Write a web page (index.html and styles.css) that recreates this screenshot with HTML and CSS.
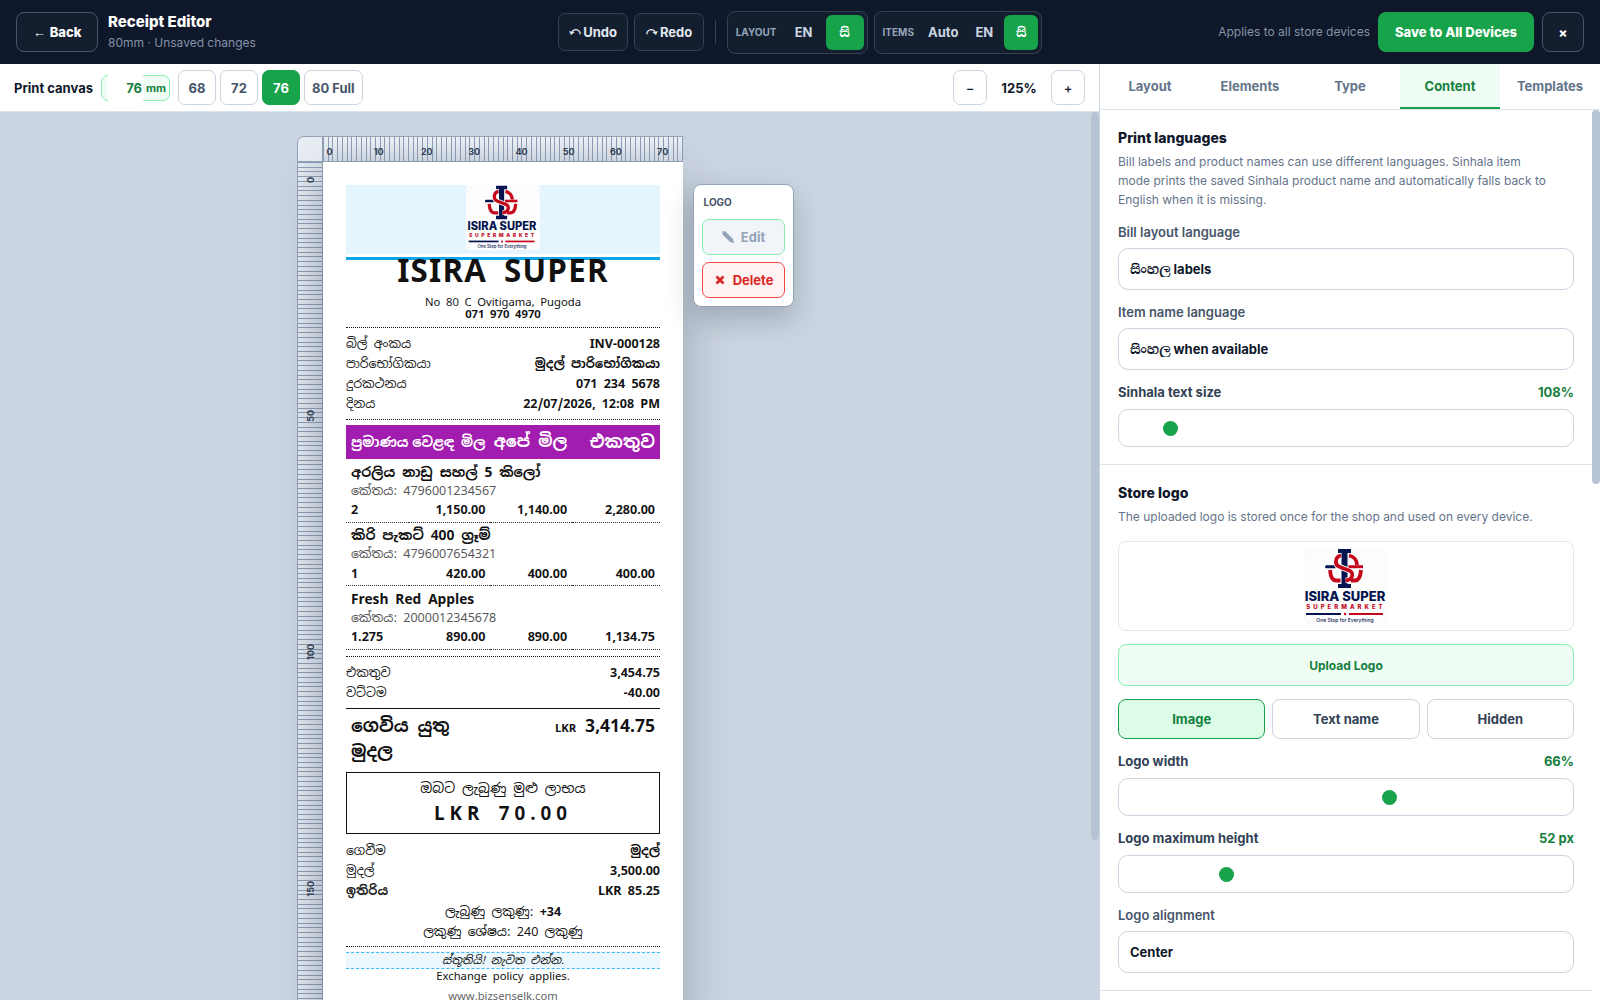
FILE: index.html
```html
<!DOCTYPE html>
<html lang="en">
<head>
    <meta charset="UTF-8">
    <title>Receipt Editor</title>
    <link rel="stylesheet" href="styles.css">
</head>
<body>

<div class="app">
    <header class="topbar">
        <div class="topbar-left">
            <button class="btn-dark"><span class="arrow">←</span> Back</button>
            <div>
                <h1>Receipt Editor</h1>
                <p class="status">80mm · Unsaved changes</p>
            </div>
        </div>
        <div class="topbar-center">
            <button class="btn-history"><span class="turn">↶</span>Undo</button>
            <button class="btn-history"><span class="turn">↷</span>Redo</button>
            <span class="divider"></span>
            <div class="lang-group">
                <span class="lang-title">LAYOUT</span>
                <button>EN</button>
                <button class="active">සි</button>
            </div>
            <div class="lang-group compact">
                <span class="lang-title">ITEMS</span>
                <button>Auto</button>
                <button>EN</button>
                <button class="active">සි</button>
            </div>
        </div>
        <div class="topbar-right">
            <span class="hint">Applies to all store devices</span>
            <button class="btn-save">Save to All Devices</button>
            <button class="btn-dark btn-close" aria-label="Close">×</button>
        </div>
    </header>

    <div class="workspace">
        <main class="editor">
            <div class="toolbar">
                <label for="canvasWidth" class="toolbar-label">Print canvas</label>
                <div class="mm-box"><input type="text" id="canvasWidth" value="76"><span>mm</span></div>
                <div class="presets">
                    <button>68</button>
                    <button>72</button>
                    <button class="active">76</button>
                    <button>80 Full</button>
                </div>
                <div class="zoom-controls">
                    <button aria-label="Zoom out">−</button>
                    <span>125%</span>
                    <button aria-label="Zoom in">+</button>
                </div>
            </div>

            <div class="scroll-row canvas">
                <div class="stage">
                    <div class="sheet">
                        <div class="corner"></div>
                        <div class="ruler-x">
                            <span>0</span><span>10</span><span>20</span><span>30</span><span>40</span><span>50</span><span>60</span><span>70</span>
                        </div>
                        <div class="ruler-y">
                            <span>0</span><span>50</span><span>100</span><span>150</span>
                        </div>
                        <article class="receipt">
                            <div class="r-logo">
                                <svg viewBox="0 0 86 76">
                                    <rect width="86" height="76" rx="4" fill="#fdfdfe"/>
                                    <path d="M0 9 L9 0 M77 0 L86 10 M0 68 L7 76 M79 76 L86 69" stroke="#e8eaee" stroke-width=".6"/>
                                    <path d="M35 1h13v4h-3.500v31H48v4H35v-4h3.500V5H35z" fill="#06154f"/>
                                    <path d="M23.500 17.200h9v3h-9a1.500 1.500 0 0 1 0-3z" fill="#06154f"/>
                                    <path d="M38 7.500c-6 1-7 9.500-1 11.500l9 3.500c5.500 2 4 9.500-3.500 10" fill="none" stroke="#fdfdfe" stroke-width="5.600"/>
                                    <g fill="none" stroke="#c4071b" stroke-width="3.800">
                                        <path d="M38 7.500c-6 1-7 9.500-1 11.500l9 3.500c5.500 2 4 9.500-3.500 10"/>
                                        <path d="M46 7.500c5 1 8 5 8 9.500"/>
                                        <path d="M45.500 18.700H60" stroke-width="3"/>
                                        <path d="M27 22c.5 7 2.500 10.500 6 10.500h4.500"/>
                                        <path d="M58 22c-.5 7-2.500 10.500-6 10.500h-4"/>
                                    </g>
                                    <text x="42" y="53" class="logo-name">ISIRA SUPER</text>
                                    <text x="43" y="61" class="logo-kind">SUPERMARKET</text>
                                    <path d="M3 66h35" stroke="#06154f" stroke-width="2"/>
                                    <path d="M46 66h34" stroke="#c4071b" stroke-width="2"/>
                                    <circle cx="42" cy="66" r="1.200" fill="#c4071b"/>
                                    <text x="42" y="74" class="logo-tag">One Stop for Everything</text>
                                </svg>
                            </div>
                            <h2>ISIRA SUPER</h2>
                            <p class="r-address">No 80 C Ovitigama, Pugoda</p>
                            <p class="r-address"><strong>071 970 4970</strong></p>
                            <hr>
                            <dl class="rows">
                                <div><dt>බිල් අංකය</dt><dd>INV-000128</dd></div>
                                <div><dt>පාරිභෝගිකයා</dt><dd>මුදල් පාරිභෝගිකයා</dd></div>
                                <div><dt>දුරකථනය</dt><dd>071 234 5678</dd></div>
                                <div><dt>දිනය</dt><dd>22/07/2026, 12:08 PM</dd></div>
                            </dl>
                            <hr class="tight">
                            <table class="items">
                                <thead>
                                    <tr><th class="small">ප්‍රමාණය</th><th class="small">වෙළඳ මිල</th><th class="medium">අපේ මිල</th><th>එකතුව</th></tr>
                                </thead>
                                <tbody>
                                    <tr class="name"><td colspan="4">අරලිය නාඩු සහල් 5 කිලෝ</td></tr>
                                    <tr class="code"><td colspan="4">කේතය: 4796001234567</td></tr>
                                    <tr class="values"><td>2</td><td>1,150.00</td><td>1,140.00</td><td>2,280.00</td></tr>
                                    <tr class="name"><td colspan="4">කිරි පැකට් 400 ග්‍රෑම්</td></tr>
                                    <tr class="code"><td colspan="4">කේතය: 4796007654321</td></tr>
                                    <tr class="values"><td>1</td><td>420.00</td><td>400.00</td><td>400.00</td></tr>
                                    <tr class="name"><td colspan="4">Fresh Red Apples</td></tr>
                                    <tr class="code"><td colspan="4">කේතය: 2000012345678</td></tr>
                                    <tr class="values"><td>1.275</td><td>890.00</td><td>890.00</td><td>1,134.75</td></tr>
                                </tbody>
                            </table>
                            <hr>
                            <dl class="rows">
                                <div><dt>එකතුව</dt><dd>3,454.75</dd></div>
                                <div><dt>වට්ටම</dt><dd>-40.00</dd></div>
                            </dl>
                            <div class="grand">
                                <span class="grand-label">ගෙවිය යුතු මුදල</span>
                                <span><small>LKR</small> 3,414.75</span>
                            </div>
                            <div class="profit">
                                <p>ඔබට ලැබුණු මුළු ලාභය</p>
                                <p class="profit-sum">LKR 70.00</p>
                            </div>
                            <dl class="rows">
                                <div><dt>ගෙවීම</dt><dd>මුදල්</dd></div>
                                <div><dt>මුදල්</dt><dd>3,500.00</dd></div>
                                <div><dt><strong>ඉතිරිය</strong></dt><dd>LKR 85.25</dd></div>
                            </dl>
                            <div class="points">
                                <p>ලැබුණු ලකුණු: <strong>+34</strong></p>
                                <p>ලකුණු ශේෂය: 240 ලකුණු</p>
                            </div>
                            <hr class="close">
                            <p class="thanks">ස්තූතියි! නැවත එන්න.</p>
                            <p class="policy">Exchange policy applies.</p>
                            <p class="site">www.bizsenselk.com</p>
                        </article>
                    </div>
                    <div class="popover">
                        <span class="popover-title">LOGO</span>
                        <button class="edit"><svg viewBox="0 0 14 14"><path d="M1.500 1 4.500 1.500 12 9l1 4-4-1L1.500 4.500z" fill="currentColor"/></svg>Edit</button>
                        <button class="delete"><svg viewBox="0 0 14 14"><path d="M3.500 3.500l7 7M10.500 3.500l-7 7" stroke="currentColor" stroke-width="2.600"/></svg>Delete</button>
                    </div>
                </div>
                <div class="scrollbar"><div class="thumb canvas-thumb"></div></div>
            </div>
        </main>

        <aside class="panel">
            <nav class="tabs">
                <button>Layout</button>
                <button>Elements</button>
                <button>Type</button>
                <button class="active">Content</button>
                <button>Templates</button>
            </nav>
            <div class="scroll-row">
                <div class="panel-body">
                    <section>
                        <h3>Print languages</h3>
                        <p>Bill labels and product names can use different languages. Sinhala item mode prints the saved Sinhala product name and automatically falls back to English when it is missing.</p>
                        <div class="field">
                            <label for="billLang">Bill layout language</label>
                            <select id="billLang"><option>සිංහල labels</option></select>
                        </div>
                        <div class="field">
                            <label for="itemLang">Item name language</label>
                            <select id="itemLang"><option>සිංහල when available</option></select>
                        </div>
                        <div class="field slider">
                            <label for="textSize">Sinhala text size</label>
                            <output for="textSize">108%</output>
                            <input type="range" id="textSize" min="100" max="200" value="108">
                        </div>
                    </section>
                    <section>
                        <h3>Store logo</h3>
                        <p>The uploaded logo is stored once for the shop and used on every device.</p>
                        <div class="logo-preview">
                            <svg viewBox="0 0 86 76">
                                <rect width="86" height="76" rx="4" fill="#fdfdfe"/>
                                <path d="M0 9 L9 0 M77 0 L86 10 M0 68 L7 76 M79 76 L86 69" stroke="#e8eaee" stroke-width=".6"/>
                                <path d="M35 1h13v4h-3.500v31H48v4H35v-4h3.500V5H35z" fill="#06154f"/>
                                <path d="M23.500 17.200h9v3h-9a1.500 1.500 0 0 1 0-3z" fill="#06154f"/>
                                <path d="M38 7.500c-6 1-7 9.500-1 11.500l9 3.500c5.500 2 4 9.500-3.500 10" fill="none" stroke="#fdfdfe" stroke-width="5.600"/>
                                <g fill="none" stroke="#c4071b" stroke-width="3.800">
                                    <path d="M38 7.500c-6 1-7 9.500-1 11.500l9 3.500c5.500 2 4 9.500-3.500 10"/>
                                    <path d="M46 7.500c5 1 8 5 8 9.500"/>
                                    <path d="M45.500 18.700H60" stroke-width="3"/>
                                    <path d="M27 22c.5 7 2.500 10.500 6 10.500h4.500"/>
                                    <path d="M58 22c-.5 7-2.500 10.500-6 10.500h-4"/>
                                </g>
                                <text x="42" y="53" class="logo-name">ISIRA SUPER</text>
                                <text x="43" y="61" class="logo-kind">SUPERMARKET</text>
                                <path d="M3 66h35" stroke="#06154f" stroke-width="2"/>
                                <path d="M46 66h34" stroke="#c4071b" stroke-width="2"/>
                                <circle cx="42" cy="66" r="1.200" fill="#c4071b"/>
                                <text x="42" y="74" class="logo-tag">One Stop for Everything</text>
                            </svg>
                        </div>
                        <button class="upload">Upload Logo</button>
                        <div class="modes">
                            <button class="active">Image</button>
                            <button>Text name</button>
                            <button>Hidden</button>
                        </div>
                        <div class="field slider">
                            <label for="logoWidth">Logo width</label>
                            <output for="logoWidth">66%</output>
                            <input type="range" id="logoWidth" min="20" max="96" value="66">
                        </div>
                        <div class="field slider">
                            <label for="logoHeight">Logo maximum height</label>
                            <output for="logoHeight">52 px</output>
                            <input type="range" id="logoHeight" min="20" max="170" value="52">
                        </div>
                        <div class="field">
                            <label for="logoAlign">Logo alignment</label>
                            <select id="logoAlign"><option>Center</option></select>
                        </div>
                    </section>
                </div>
                <div class="scrollbar"><div class="thumb panel-thumb"></div></div>
            </div>
        </aside>
    </div>
</div>

</body>
</html>
```

FILE: styles.css
```css
* {
    box-sizing: border-box;
}

:root {
    --zoom: 1.25;
    --mm: calc(1mm * var(--zoom));
}

body {
    margin: 0;
    font-family: Inter, "Noto Serif Sinhala", sans-serif;
    font-size: 13px;
    color: #0f172a;
}

h1, h2, h3, p, dl, dt, dd {
    margin: 0;
}

button, input, select {
    font: inherit;
    font-weight: 700;
    color: inherit;
}

button {
    display: flex;
    align-items: center;
    justify-content: center;
    padding: 0;
    cursor: pointer;
    white-space: nowrap;
}

/* store logo lettering */
.logo-name, .logo-kind, .logo-tag {
    text-anchor: middle;
    font-family: Inter, sans-serif;
    fill: #06154f;
}

.logo-name {
    font-size: 13px;
    font-weight: 800;
}

.logo-kind {
    font-size: 6px;
    font-weight: 800;
    letter-spacing: 3px;
    fill: #c4071b;
}

.logo-tag {
    font-size: 5px;
    font-weight: 500;
}

.app {
    display: flex;
    flex-direction: column;
    height: 100vh;
    overflow: hidden;
}

/* top bar */
.topbar {
    display: grid;
    grid-template-columns: 1fr auto 1fr;
    align-items: center;
    height: 64px;
    flex: none;
    padding: 0 16px;
    background: #0f172a;
    color: #fff;
}

.topbar-left, .topbar-center, .topbar-right {
    display: flex;
    align-items: center;
}

.topbar-left {
    gap: 10px;
}

.topbar-center {
    gap: 6px;
}

.topbar-right {
    gap: 8px;
    justify-content: flex-end;
}

.topbar h1 {
    font-size: 15px;
    line-height: 22px;
    font-weight: 800;
}

.status, .hint {
    font-size: 12px;
    line-height: 20px;
    color: #8493a8;
}

.btn-dark {
    gap: 4px;
    width: 82px;
    height: 40px;
    border: 1px solid #475569;
    border-radius: 8px;
    background: #131e2e;
    font-weight: 800;
}

.arrow {
    font-family: "Noto Sans", sans-serif;
}

.turn {
    font-family: "Noto Sans Math", sans-serif;
    font-size: 11px;
    line-height: 16px;
}

.btn-close {
    width: 42px;
}

.btn-history {
    gap: 1px;
    width: 70px;
    height: 38px;
    border: 1px solid #334155;
    border-radius: 7px;
    background: #131e2e;
    color: #e2e8f0;
}

.divider {
    width: 1px;
    height: 24px;
    margin: 0 5px;
    background: #334155;
}

.lang-group {
    display: flex;
    align-items: center;
    padding: 3px;
    gap: 3px;
    border: 1px solid #334155;
    border-radius: 8px;
    background: #131e2e;
}

.lang-group button {
    min-width: 38px;
    height: 35px;
    padding: 0 6px;
    border: 0;
    border-radius: 6px;
    background: none;
    color: #cbd5e1;
}

.compact button {
    min-width: 34px;
}

.lang-group .active {
    background: #16a34a;
    color: #fff;
}

.lang-title {
    padding: 0 5px;
    font-size: 10px;
    font-weight: 700;
    color: #94a3b8;
}

.btn-save {
    height: 40px;
    padding: 0 17px;
    border: 0;
    border-radius: 8px;
    background: #16a34a;
    font-weight: 800;
}

/* editor */
.workspace {
    display: grid;
    grid-template-columns: 1fr 500px;
    flex: 1;
    min-height: 0;
}

.editor {
    display: flex;
    flex-direction: column;
    min-width: 0;
    min-height: 0;
    border-right: 1px solid #cbd5e1;
}

.toolbar {
    display: flex;
    align-items: center;
    gap: 8px;
    height: 48px;
    flex: none;
    padding: 0 14px;
    border-bottom: 1px solid #dbe3ec;
}

.toolbar-label {
    font-weight: 700;
}

.mm-box {
    display: flex;
    align-items: center;
    width: 69px;
    height: 26px;
    padding: 0 4px 0 5px;
    border: 1px solid #86efac;
    border-radius: 7px;
    background: #f0fdf4;
    color: #15803d;
    font-size: 11px;
    font-weight: 700;
}

.mm-box input {
    width: 37px;
    height: 38px;
    margin-right: 2px;
    padding: 0 2px 0 0;
    border: 0;
    border-radius: 10px;
    background: #fff;
    box-shadow: 0 1px 2px rgba(15, 23, 42, 0.04);
    font-size: 13px;
    text-align: right;
}

.presets {
    display: flex;
    gap: 4px;
}

.presets button, .zoom-controls button {
    min-width: 38px;
    height: 35px;
    padding: 0 7px;
    border: 1px solid #cbd5e1;
    border-radius: 7px;
    background: #fff;
    color: #475569;
}

.presets .active {
    border-color: #16a34a;
    background: #16a34a;
    color: #fff;
}

.zoom-controls {
    display: flex;
    align-items: center;
    margin-left: auto;
}

.zoom-controls button {
    min-width: 34px;
    color: #0f172a;
    font-weight: 500;
}

.zoom-controls span {
    width: 64px;
    text-align: center;
    font-weight: 700;
}

.scroll-row {
    display: flex;
    flex: 1;
    min-height: 0;
    overflow: hidden;
}

.scrollbar {
    flex: none;
    width: 8px;
}

.thumb {
    border-radius: 4px;
    background: #b6c4d6;
}

.canvas-thumb {
    height: 82%;
}

.panel-thumb {
    height: 42%;
}

.canvas {
    background: #cbd5e1;
}

.stage {
    display: flex;
    flex: 1;
    justify-content: center;
    align-items: flex-start;
    gap: 10px;
    padding-top: 24px;
}

.sheet {
    display: grid;
    grid-template-columns: 26px calc(76 * var(--mm));
    grid-template-rows: 26px 1fr;
}

.corner, .ruler-x, .ruler-y {
    border: 0 solid #94a3b8;
}

.corner {
    border-width: 1px;
    border-radius: 7px 0 0 0;
    background: #e8edf4;
}

.ruler-x {
    display: flex;
    align-items: center;
    overflow: hidden;
    border-width: 1px 0 1px 0;
    background: repeating-linear-gradient(90deg, #8c9db5 0 1px, transparent 1px var(--mm)),
        linear-gradient(#eef2f7, #d5dde7);
}

.ruler-x span {
    flex: none;
    width: calc(10 * var(--mm));
    padding: 5px 0 0 3px;
    font-size: 9px;
    font-weight: 700;
    color: #334155;
}

.ruler-y {
    display: flex;
    flex-direction: column;
    overflow: hidden;
    border-width: 0 1px;
    background: repeating-linear-gradient(#8c9db5 0 1px, transparent 1px var(--mm)),
        linear-gradient(90deg, #e6ebf2, #d5dde7);
}

.ruler-y span {
    flex: none;
    height: calc(50 * var(--mm));
    writing-mode: sideways-lr;
    text-align: center;
    font-size: 9px;
    line-height: 26px;
    font-weight: 700;
    color: #334155;
}

.ruler-y span:first-child {
    margin-top: calc(18px - 25 * var(--mm));
}

/* printed receipt, sized in unzoomed pixels */
.receipt {
    zoom: var(--zoom);
    padding: 18px;
    background: #fff;
    box-shadow: 0 14px 36px rgba(15, 23, 42, 0.25);
    font-family: "Noto Sans Sinhala", "Noto Sans", sans-serif;
    font-size: 10px;
    line-height: 16px;
    color: #111;
}

.r-logo {
    display: flex;
    justify-content: center;
    height: 60px;
    border-bottom: 3px solid #0ea5e9;
    background: linear-gradient(#e4f5fd 55px, #fff 55px);
}

.r-logo svg {
    width: 59px;
    height: 52px;
}

.receipt h2 {
    font-size: 25px;
    line-height: 18px;
    letter-spacing: 1px;
    text-align: center;
    white-space: nowrap;
}

.r-address {
    font-size: 9px;
    line-height: 10px;
    text-align: center;
}

.receipt h2 + .r-address {
    margin-top: 11px;
}

.receipt hr {
    margin: 5px 0;
    border: 0;
    border-top: 1px dotted #111;
}

.receipt .tight {
    margin: 4px 0;
}

.rows div {
    display: flex;
    justify-content: space-between;
}

.rows dd {
    font-weight: 700;
}

.rows dt {
    color: #222;
}

.items {
    width: 100%;
    table-layout: fixed;
    border-collapse: collapse;
}

.items th {
    height: 27px;
    padding: 0 4px;
    background: #a21caf;
    color: #fff;
    font-size: 14px;
    text-align: right;
    white-space: nowrap;
}

.items th:nth-child(1) {
    width: 20%;
    text-align: left;
}

.items th:nth-child(2), .items th:nth-child(3) {
    width: 26%;
    padding-left: 0;
}

.items .small {
    font-size: 11px;
}

.items .medium {
    font-size: 13px;
}

.items td {
    padding: 0 4px;
}

.name td {
    padding-top: 2px;
    font-size: 11px;
    line-height: 16px;
    font-weight: 700;
}

.code td {
    line-height: 14px;
    color: #555;
}

.values {
    border-bottom: 1px dotted #333;
}

.values td {
    line-height: 18px;
    font-weight: 700;
    text-align: right;
}

.values td:first-child {
    text-align: left;
}

.grand {
    display: flex;
    justify-content: space-between;
    margin-top: 4px;
    padding: 3px 4px 7px;
    border-top: 1px solid #111;
    font-size: 14px;
    line-height: 20px;
    font-weight: 700;
}

.grand-label {
    width: 96px;
}

.grand small {
    font-size: 9px;
}

.profit {
    padding: 4px 0;
    border: 1px solid #111;
    font-size: 11px;
    text-align: center;
}

.profit-sum {
    font-size: 15px;
    line-height: 24px;
    font-weight: 700;
    letter-spacing: 4px;
}

.profit + .rows {
    margin-top: 6px;
}

.points {
    margin-top: 1px;
    text-align: center;
}

.receipt .close {
    margin: 3px 0 4px;
}

.thanks {
    border: 1px dashed #38bdf8;
    border-width: 1px 0;
    background: #ecf8fe;
    font-size: 9px;
    line-height: 12px;
    font-style: italic;
    text-align: center;
}

.policy, .site {
    font-size: 9px;
    line-height: 12px;
    text-align: center;
}

.site {
    margin-top: 4px;
    color: #666;
}

.popover {
    display: flex;
    flex-direction: column;
    gap: 7px;
    width: 101px;
    margin-top: 48px;
    padding: 8px;
    border: 1px solid #94a3b8;
    border-radius: 8px;
    background: #fff;
    box-shadow: 0 12px 28px rgba(15, 23, 42, 0.22);
}

.popover-title {
    padding-left: 2px;
    font-size: 10px;
    line-height: 19px;
    font-weight: 700;
    color: #475569;
}

.popover button {
    gap: 6px;
    height: 36px;
    border: 1px solid #86efac;
    border-radius: 7px;
    background: #f1f5f9;
    color: #94a3b8;
}

.popover .delete {
    border-color: #ef4444;
    background: #fef2f2;
    color: #dc2626;
}

.popover svg {
    width: 14px;
    height: 14px;
}

/* settings panel */
.panel {
    display: flex;
    flex-direction: column;
    min-height: 0;
}

.tabs {
    display: grid;
    grid-template-columns: repeat(5, 1fr);
    height: 46px;
    flex: none;
    border-bottom: 1px solid #dbe3ec;
}

.tabs button {
    border: 0;
    border-bottom: 2px solid transparent;
    background: none;
    color: #64748b;
}

.tabs .active {
    border-color: #16a34a;
    background: #f0fdf4;
    color: #15803d;
}

.panel-body {
    flex: 1;
}

.panel-body section {
    padding: 18px 18px 17px;
    border-bottom: 1px solid #dbe3ec;
}

.panel h3 {
    font-size: 14px;
    line-height: 20px;
    font-weight: 800;
}

.panel p {
    max-width: 436px;
    margin-top: 4px;
    font-size: 12px;
    line-height: 19px;
    color: #64748b;
}

.field {
    margin-top: 13px;
}

.panel p + .field {
    margin-top: 14px;
}

.field label {
    display: block;
    margin-bottom: 7px;
    font-size: 13px;
    line-height: 18px;
    font-weight: 600;
    color: #475569;
}

.field select, .field input {
    display: block;
    width: 100%;
    height: 42px;
    padding: 0 11px;
    border: 1px solid #cbd5e1;
    border-radius: 10px;
    background: #fff;
    appearance: none;
}

.slider {
    display: grid;
    grid-template-columns: 1fr auto;
}

.slider label, .slider output {
    margin-bottom: 7px;
    font-size: 13px;
    line-height: 19px;
    font-weight: 700;
    color: #334155;
}

.slider output {
    color: #15803d;
}

.field input {
    grid-column: 1 / 3;
    height: 38px;
    margin: 0;
}

.field input::-webkit-slider-thumb {
    width: 15px;
    height: 15px;
    border-radius: 50%;
    background: #16a34a;
    appearance: none;
}

.logo-preview {
    display: flex;
    align-items: center;
    justify-content: center;
    height: 90px;
    margin-top: 15px;
    border: 1px solid #e2e8f0;
    border-radius: 8px;
}

.logo-preview svg {
    width: 86px;
    height: 76px;
}

.upload {
    width: 100%;
    height: 42px;
    margin: 13px 0;
    border: 1px solid #86efac;
    border-radius: 8px;
    background: #f0fdf4;
    color: #15803d;
    font-size: 12px;
}

.modes {
    display: grid;
    grid-template-columns: repeat(3, 1fr);
    gap: 7px;
}

.modes button {
    height: 40px;
    border: 1px solid #cbd5e1;
    border-radius: 8px;
    background: #fff;
    color: #334155;
}

.modes .active {
    border-color: #16a34a;
    background: #dcfce7;
    color: #15803d;
}
```
